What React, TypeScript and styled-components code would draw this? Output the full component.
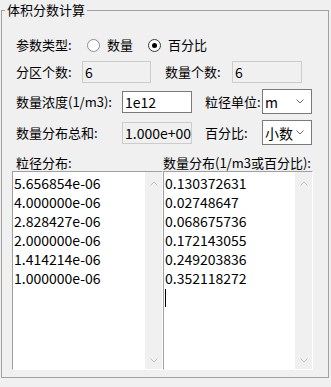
import React from "react";
import styled, { createGlobalStyle } from "styled-components";

const GlobalStyle = createGlobalStyle`
  html, body {
    margin: 0;
    padding: 0;
    background: #f0f0f0;
  }
  body {
    font-family: "Noto Sans CJK SC", "Microsoft YaHei", sans-serif;
    font-size: 13px;
    color: #000;
  }
`;

const Window = styled.div`
  width: 331px;
  height: 387px;
  padding: 1px 2px 0 1px;
  box-sizing: border-box;
`;

const Group = styled.fieldset`
  margin: 0;
  padding: 0;
  height: 377px;
  box-sizing: border-box;
  border: 1px solid #a0a0a0;
  min-width: 0;
`;

const Title = styled.legend`
  margin-left: 3px;
  padding: 0 2px;
  font-size: 13px;
  line-height: 18px;
`;

const Content = styled.div`
  display: flex;
  flex-direction: column;
  padding: 15px 0 0 10px;
`;

const Row = styled.div<{ $h?: number; $mt?: number }>`
  display: flex;
  align-items: center;
  height: ${p => p.$h ?? 22}px;
  margin-top: ${p => p.$mt ?? 0}px;
  padding-left: 4px;
`;

const Label = styled.span<{ $w: number; $indent?: number }>`
  width: ${p => p.$w}px;
  padding-left: ${p => p.$indent ?? 0}px;
  box-sizing: border-box;
  white-space: nowrap;
  flex-shrink: 0;
  line-height: 18px;
`;

const Radio = styled.label`
  display: flex;
  align-items: center;
  gap: 7px;
  margin-right: 15px;
  line-height: 18px;
`;

const RadioCircle = styled.span<{ $checked?: boolean }>`
  width: 13px;
  height: 13px;
  box-sizing: border-box;
  border-radius: 50%;
  border: 1px solid ${p => (p.$checked ? "#3c3c3c" : "#8c8c8c")};
  background: #fff;
  display: flex;
  align-items: center;
  justify-content: center;

  &::after {
    content: "";
    width: 5px;
    height: 5px;
    border-radius: 50%;
    background: ${p => (p.$checked ? "#000" : "transparent")};
  }
`;

const TextBox = styled.input<{ $w: number }>`
  width: ${p => p.$w}px;
  height: 22px;
  box-sizing: border-box;
  margin: 0;
  padding: 0 0 0 2px;
  flex-shrink: 0;
  font-family: "Noto Sans CJK SC", sans-serif;
  font-size: 14px;
  color: #000;
  outline: none;
  border: 1px solid ${p => (p.disabled ? "#cccccc" : "#7a7a7a")};
  background: ${p => (p.disabled ? "#f0f0f0" : "#fff")};
  overflow: hidden;

  &:disabled {
    color: #000;
    -webkit-text-fill-color: #000;
  }
`;

const Select = styled.div`
  width: 50px;
  height: 25px;
  box-sizing: border-box;
  border: 1px solid #7a7a7a;
  background: #fff;
  display: flex;
  align-items: center;
  justify-content: space-between;
  padding: 0 7px 0 2px;
  flex-shrink: 0;
  font-size: 14px;

  svg {
    display: block;
  }
`;

const Chevron = ({ up, color = "#6d6d6d" }: { up?: boolean; color?: string }) => (
  <svg width="8" height="5" viewBox="0 0 8 5">
    <polyline
      points={up ? "0.5,4.5 4,1 7.5,4.5" : "0.5,0.5 4,4 7.5,0.5"}
      fill="none"
      stroke={color}
      strokeWidth="1"
    />
  </svg>
);

const Lists = styled.div`
  display: grid;
  grid-template-columns: 151px 150px;
  margin-top: 10px;
`;

const ListCaption = styled.div<{ $indent?: number }>`
  padding-left: ${p => p.$indent ?? 0}px;
  height: 16px;
  line-height: 16px;
  white-space: nowrap;
`;

const ListBox = styled.div`
  height: 199px;
  box-sizing: border-box;
  border-top: 1px solid #a0a0a0;
  border-left: 1px solid #a0a0a0;
  border-right: 1px solid #fff;
  border-bottom: 1px solid #fff;
  background: #fff;
  display: flex;
`;

const Lines = styled.div`
  flex: 1;
  padding: 2px 0 0 1px;
  font-size: 14px;
  line-height: 19px;
  white-space: nowrap;
  overflow: hidden;
`;

const Line = styled.div`
  height: 19px;
  display: flex;
  align-items: center;
`;

const Caret = styled.span`
  width: 1px;
  height: 18px;
  background: #000;
  margin-top: 1px;
`;

const ScrollBar = styled.div`
  width: 17px;
  background: #f0f0f0;
  display: flex;
  flex-direction: column;
  align-items: center;
  justify-content: space-between;
  padding: 9px 0 6px;
  box-sizing: border-box;
`;

const sizes = [
  "5.656854e-06",
  "4.000000e-06",
  "2.828427e-06",
  "2.000000e-06",
  "1.414214e-06",
  "1.000000e-06",
];

const counts = [
  "0.130372631",
  "0.02748647",
  "0.068675736",
  "0.172143055",
  "0.249203836",
  "0.352118272",
];

const List: React.FC<{ items: string[]; caret?: boolean }> = ({ items, caret }) => (
  <ListBox>
    <Lines>
      {items.map(t => (
        <Line key={t}>{t}</Line>
      ))}
      {caret && (
        <Line>
          <Caret />
        </Line>
      )}
    </Lines>
    <ScrollBar>
      <Chevron up color="#c2c2c2" />
      <Chevron color="#c2c2c2" />
    </ScrollBar>
  </ListBox>
);

export default function App() {
  return (
    <Window>
      <GlobalStyle />
      <Group>
        <Title>体积分数计算</Title>
        <Content>
          <Row>
            <Label $w={71}>参数类型:</Label>
            <Radio>
              <RadioCircle />
              数量
            </Radio>
            <Radio>
              <RadioCircle $checked />
              百分比
            </Radio>
          </Row>

          <Row $mt={5}>
            <Label $w={66}>分区个数:</Label>
            <TextBox $w={69} value="6" disabled readOnly />
            <Label $w={81} $indent={14}>数量个数:</Label>
            <TextBox $w={70} value="6" disabled readOnly />
          </Row>

          <Row $h={25} $mt={6}>
            <Label $w={106}>数量浓度(1/m3):</Label>
            <TextBox $w={70} value="1e12" readOnly />
            <Label $w={70} $indent={13}>粒径单位:</Label>
            <Select>
              <span>m</span>
              <Chevron />
            </Select>
          </Row>

          <Row $h={25} $mt={6}>
            <Label $w={106}>数量分布总和:</Label>
            <TextBox $w={70} value="1.000e+00" disabled readOnly />
            <Label $w={70} $indent={13}>百分比:</Label>
            <Select>
              <span>小数</span>
              <Chevron />
            </Select>
          </Row>

          <Lists>
            <ListCaption $indent={4}>粒径分布:</ListCaption>
            <ListCaption>数量分布(1/m3或百分比):</ListCaption>
            <List items={sizes} />
            <List items={counts} caret />
          </Lists>
        </Content>
      </Group>
    </Window>
  );
}
